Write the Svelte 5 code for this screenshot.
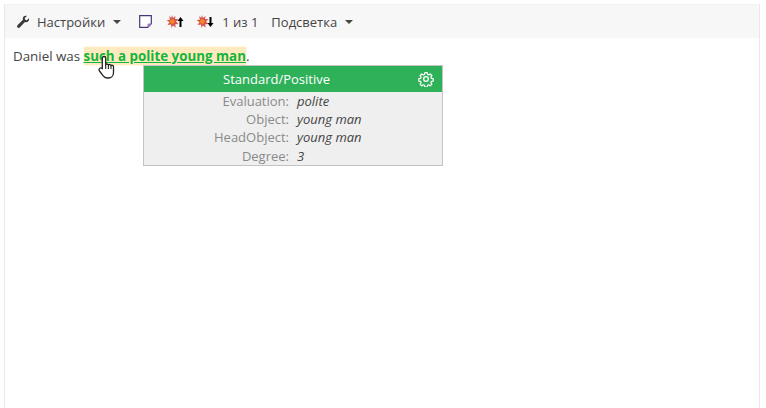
<script>
	const fields = [
		['Evaluation:', 'polite'],
		['Object:', 'young man'],
		['HeadObject:', 'young man'],
		['Degree:', '3']
	];
</script>

<div class="page">
	<div class="toolbar">
		<button class="btn first">
			<svg class="wrench" width="14" height="14" viewBox="0 0 14 14"><path d="M13 3.200c.3 1.500-.1 2.800-1.200 3.500-1 .6-2 .6-2.900.2L4 12.300c-.8.800-1.900.8-2.500.2s-.6-1.700.2-2.500L7 4.800c-.4-.9-.3-2 .4-3C8.200.8 9.500.5 10.900.9L8.800 3l.3 1.800 1.800.4z" fill="#3a3a3a"/></svg>
			Настройки
			<span class="caret"></span>
		</button>
		<svg class="note" width="13" height="13" viewBox="0 0 13 13">
			<path d="M.7.7h11.600v8l-3.600 3.600H.7z" fill="#fff" stroke="#3f3a7a" stroke-width="1.200"/>
			<path d="M12 9l-3 3V9z" fill="#6fa8dc" stroke="#b0559a" stroke-width=".7"/>
		</svg>
		<span class="mark">
			<svg width="18" height="14" viewBox="0 0 18 14">
				<path d="M6 0l1 3 2.500-2L9 4l3.500.2L10 6.500l2.500 2.500-3.300.2.500 3.300L7 10.500 5.500 13 5 9.500l-3.500.5L3.500 7 .5 5.500 4 4.500 3 1.300l2.300 1.500z" fill="#d9534f"/>
				<circle cx="6.300" cy="6.500" r="2.300" fill="#f58a1f"/>
				<path d="M15 2l3 4h-2v6h-2V6h-2z" fill="#000" transform="translate(-.5 0)"/>
			</svg>
		</span>
		<span class="mark">
			<svg width="18" height="14" viewBox="0 0 18 14">
				<path d="M6 0l1 3 2.500-2L9 4l3.500.2L10 6.500l2.500 2.500-3.300.2.500 3.300L7 10.500 5.500 13 5 9.500l-3.500.5L3.500 7 .5 5.500 4 4.500 3 1.300l2.300 1.500z" fill="#d9534f"/>
				<circle cx="6.300" cy="6.500" r="2.300" fill="#f58a1f"/>
				<path d="M14 2h2v6h2l-3 4-3-4h2z" fill="#000" transform="translate(-.5 0)"/>
			</svg>
		</span>
		<span class="count">1 из 1</span>
		<button class="btn">
			Подсветка
			<span class="caret"></span>
		</button>
	</div>

	<div class="content">
		<p>Daniel was <span class="hit">such a polite young man</span>.</p>

		<svg class="cursor" width="20" height="25" viewBox="0 0 20 25">
			<path d="M6 1.500c1 0 1.700.7 1.700 1.700v6.300c.8-.8 2.300-.6 2.700.4.800-.7 2.200-.4 2.600.6.900-.6 2.500-.1 2.500 1.400v5.600c0 3-2 5.500-5 5.500H9c-1.900 0-3-1-4-2.300L1.500 16c-.8-1-.5-2.300.4-2.800.9-.5 1.800-.2 2.400.5V3.200C4.300 2.200 5 1.500 6 1.500z" fill="#fff" stroke="#222" stroke-width="1.300" stroke-linejoin="round"/>
			<path d="M7.700 9.500V14M10.400 10v4M13 10.700V14" stroke="#222" stroke-width="1.100" fill="none"/>
		</svg>

		<div class="popup">
			<div class="popup-head">
				<span>Standard/Positive</span>
				<svg class="gear" width="16" height="16" viewBox="0 0 24 24" fill="none" stroke="#fff" stroke-width="2" stroke-linejoin="round">
					<circle cx="12" cy="12" r="3.500"/>
					<path d="M10 1.500h4l.6 3.100 1.900.8 2.600-1.800 2.800 2.800-1.800 2.600.8 1.900 3.100.6v4l-3.100.6-.8 1.900 1.800 2.600-2.800 2.800-2.600-1.800-1.900.8-.6 3.100h-4l-.6-3.100-1.900-.8-2.600 1.800-2.800-2.800 1.800-2.600-.8-1.900-3.100-.6v-4l3.100-.6.800-1.900-1.800-2.600 2.800-2.800 2.600 1.800 1.900-.8z" transform="translate(1.200 1.200) scale(.9)"/>
				</svg>
			</div>
			<div class="popup-body">
				{#each fields as [label, value]}
					<div class="row">
						<span class="label">{label}</span>
						<span class="value">{value}</span>
					</div>
				{/each}
			</div>
		</div>
	</div>
</div>

<style>
	:global(body) {
		margin: 0;
		background: #fff;
		font-family: "Open Sans", sans-serif;
		font-size: 13px;
		color: #444;
	}

	.page {
		box-sizing: border-box;
		width: 756px;
		height: 408px;
		margin: 4px 0 0 4px;
		border: 1px solid #e8e8e8;
		border-bottom: none;
		border-top-color: #f2f2f2;
		overflow: hidden;
	}

	.toolbar {
		display: flex;
		align-items: center;
		height: 33px;
		background: #f7f7f7;
		padding-left: 11px;
	}

	.btn {
		display: flex;
		align-items: center;
		padding: 0;
		border: none;
		background: none;
		font: inherit;
		color: #444;
	}

	.wrench {
		margin-right: 7px;
	}

	.caret {
		width: 0;
		height: 0;
		margin-left: 8px;
		border-left: 4px solid transparent;
		border-right: 4px solid transparent;
		border-top: 4px solid #444;
	}

	.note {
		margin-left: 18px;
	}

	.mark {
		display: flex;
		margin-left: 14px;
	}

	.mark + .mark {
		margin-left: 12px;
	}

	.count {
		margin-left: 8px;
	}

	.btn:last-child {
		margin-left: 13px;
	}

	.content {
		position: relative;
		padding: 9px 8px;
	}

	p {
		margin: 0;
		line-height: 18px;
		font-size: 13.350px;
	}

	.hit {
		background: #ffeac0;
		box-shadow: 0 0 2px #ffeac0;
		color: #14b53c;
		font-weight: 700;
		text-decoration: underline;
	}

	.cursor {
		position: absolute;
		left: 93px;
		top: 17px;
	}

	.popup {
		position: absolute;
		left: 138px;
		top: 27px;
		width: 298px;
		border: 1px solid #c4c4c4;
		background: #efefef;
	}

	.popup-head {
		position: relative;
		height: 26px;
		padding-right: 33px;
		background: #2eb159;
		color: #fff;
		text-align: center;
		line-height: 26px;
	}

	.gear {
		position: absolute;
		right: 8px;
		top: 5px;
	}

	.row {
		display: grid;
		grid-template-columns: 145px 1fr;
		column-gap: 8px;
		line-height: 18px;
	}

	.row:last-child {
		margin-top: 1px;
	}

	.label {
		text-align: right;
		color: #8a8a8a;
	}

	.value {
		font-style: italic;
		color: #444;
	}
</style>
